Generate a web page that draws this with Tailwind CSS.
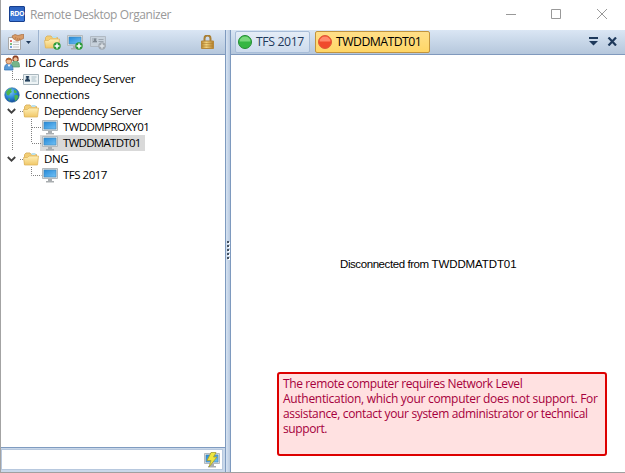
<!DOCTYPE html>
<html lang="en">
<head>
<meta charset="utf-8">
<title>Remote Desktop Organizer</title>
<script src="https://cdn.jsdelivr.net/npm/@tailwindcss/browser@4"></script>
</head>
<body class="w-[625px] h-[473px] overflow-hidden bg-white font-['Open_Sans','Noto_Sans',sans-serif] text-[11.5px] text-black">
<svg class="absolute w-0 h-0">
  <defs>
    <linearGradient id="blue" x1="0" y1="0" x2="1" y2="1"><stop offset="0" stop-color="#2589d8"/><stop offset="1" stop-color="#72c1f5"/></linearGradient>
    <linearGradient id="fold" x1="0" y1="0" x2="0" y2="1"><stop offset="0" stop-color="#fff0b8"/><stop offset="1" stop-color="#f0c767"/></linearGradient>
    <linearGradient id="gold" x1="0" y1="0" x2="1" y2="0"><stop offset="0" stop-color="#b98732"/><stop offset=".4" stop-color="#f4d681"/><stop offset="1" stop-color="#b27d2a"/></linearGradient>
    <radialGradient id="sea" cx=".4" cy=".3" r=".7"><stop offset="0" stop-color="#78c6f5"/><stop offset=".6" stop-color="#2884d3"/><stop offset="1" stop-color="#124c9c"/></radialGradient>
    <symbol id="folder" viewBox="0 0 16 16"><path d="M1.5 13.5V3.5L3 2h4l1 1.5h5.500V13.500z" fill="#f3ce74" stroke="#dcb566"/><path d="M8.500 2h4v2h-4z" fill="#b9e0ef"/><path d="M.5 6.500h4L6 5h9.500l-1 9H1.500z" fill="url(#fold)" stroke="#e0b65f" stroke-width=".8"/></symbol>
    <symbol id="monitor" viewBox="0 0 16 16"><path d="M.5 1.500h15v10H.5z" fill="#d9dddf" stroke="#b3b9bd"/><path d="M2 3h12v7H2z" fill="url(#blue)" stroke="#3c86bd" stroke-width=".6"/><path d="M6 12h4v2h2v1.500H4V14h2z" fill="#a9adb0"/></symbol>
    <symbol id="plus" viewBox="0 0 8 8"><circle cx="4" cy="4" r="3.700" fill="#2a9a38"/><path d="M4 1.600v4.800M1.600 4h4.800" stroke="#fff" stroke-width="1.500"/></symbol>
    <symbol id="chev" viewBox="0 0 9 6"><path d="M.8 1l3.700 3.700L8.200 1" fill="none" stroke="#404040" stroke-width="1.800"/></symbol>
  </defs>
</svg>
<div class="flex flex-col h-full border-l border-[#a3a3a3] border-b border-b-[#a0a0a0]">
  <header class="h-[30px] shrink-0 flex items-center bg-white">
    <div class="ml-2 -mt-[2px] w-4 h-4 rounded-[1px] border border-[#173f8e] bg-linear-to-b from-[#2b60bd] to-[#3e7bdc] text-white text-[7px] leading-[14px] font-bold text-center tracking-[-0.4px]">RDO</div>
    <div class="ml-[5px] -mt-px text-[12px] text-[#999] whitespace-nowrap leading-4 tracking-[-0.42px]">Remote Desktop Organizer</div>
    <svg class="ml-auto w-[102px] h-[12px] mr-[18px] -mt-[2px]" viewBox="0 0 102 12" fill="none" stroke="#999"><path d="M1 6.500h10M46.500 1.500h9v9h-9zM92 1l10 10M102 1L92 11"/></svg>
  </header>
  <div class="flex flex-1 min-h-0">
    <aside class="w-[224px] shrink-0 flex flex-col">
      <div class="h-[25px] shrink-0 flex items-center bg-linear-to-b from-[#dae6f4] to-[#b5c7dc] border-b border-[#8099bd]">
        <svg class="ml-[7px] w-4 h-4" viewBox="0 0 16 16"><path d="M.5 3.500h12v12H.5z" fill="#fafafa" stroke="#a8a8a8"/><path d="M2 7h2" stroke="#e54040" stroke-width="1.500"/><path d="M2 10h2" stroke="#53a953" stroke-width="1.500"/><path d="M2 13h2" stroke="#4c83d4" stroke-width="1.500"/><path d="M5 8h6M5 10.500h6M5 13h6" stroke="#c4c4c4"/><path d="M4 2l3-1.500 3 1L15.500 0v4.500L12 6 9 7 5 4.500z" fill="#d89c68" stroke="#a96d3f" stroke-width=".7"/><path d="M7 5l1-2M9 6l1-2M11 6l1-2" stroke="#a66c40" stroke-width=".6"/></svg>
        <svg class="ml-[2px] w-[5px] h-[3px] mt-px" viewBox="0 0 5 3"><path d="M0 0h5L2.500 3z" fill="#1e395b"/></svg>
        <div class="ml-[7px] w-[2px] h-full bg-[#9db3cf] border-r border-[#d7e3f1]"></div>
        <div class="relative ml-[4px] w-4 h-4"><svg class="w-4 h-4"><use href="#folder"/></svg><svg class="absolute left-[9px] top-[8px] w-2 h-2"><use href="#plus"/></svg></div>
        <div class="relative ml-[7px] w-4 h-4"><svg class="w-4 h-4"><use href="#monitor"/></svg><svg class="absolute left-[8px] top-[8px] w-2 h-2"><use href="#plus"/></svg></div>
        <svg class="ml-[7px] w-4 h-4" viewBox="0 0 16 16"><path d="M.5 2.500h15v10H.5z" fill="#c8d2dc" stroke="#b0b9c3"/><path d="M2 4h5v5H2z" fill="#b0bac4"/><path d="M3 8V7h1V4.500h2V7h1v1z" fill="#7f8993"/><path d="M8.500 5.500h5M8.500 7.500h5" stroke="#9da7b1"/><circle cx="12" cy="12" r="3.700" fill="#a1a9b1"/><path d="M12 9.600v4.800M9.600 12h4.800" stroke="#e0e5ea" stroke-width="1.400"/></svg>
        <svg class="ml-auto mr-[11px] w-[13px] h-[14px]" viewBox="0 0 13 14"><path d="M3.500 6V3.500a3 3 0 016 0V6" fill="none" stroke="#a97f34" stroke-width="2"/><path d="M.5 6h12v7.500H.5z" fill="url(#gold)" stroke="#b5883c"/><path d="M1 8.500h11M1 11h11" stroke="#ad7d2d" stroke-width=".6"/></svg>
      </div>
      <div class="relative flex-1 bg-white whitespace-nowrap leading-4">
        <div class="h-4 flex items-center pl-[3px] gap-[5px]">
          <svg class="w-4 h-4 shrink-0" viewBox="0 0 16 16"><path d="M7.500 12c0-5 1-6 4-6s4 2 4 6z" fill="#77b58a" stroke="#4b8f68" stroke-width=".7"/><path d="M8.500 6C8 2 9 .5 11.500.5S15 2 14.500 6z" fill="#8a3e22"/><circle cx="11.500" cy="4.300" r="2" fill="#f0bd92"/><path d="M.5 15c0-5 1-6 4-6s4.500 2 4.500 6z" fill="#5a9bd8" stroke="#2d6caf" stroke-width=".7"/><circle cx="4.800" cy="6" r="2.900" fill="#efb98c" stroke="#985530" stroke-width=".6"/><path d="M1.700 6C1.500 1.500 8 1.500 8 6 6 5 4 4 1.700 6z" fill="#ad5d2e"/><path d="M3.500 9.500L5 12l1.500-2.500z" fill="#fff"/></svg>
          <span class="tracking-[-0.25px]">ID Cards</span>
        </div>
        <div class="h-4 flex items-center pl-[22px] gap-[5px]">
          <svg class="w-4 h-4 shrink-0" viewBox="0 0 16 16"><path d="M.5 3.500h15v10H.5z" fill="#edf3f5" stroke="#a9b6bd"/><path d="M2 5h5v6H2z" fill="#cad8df"/><path d="M2 10.500V9l1.500-1L3 5h3l-.5 3L7 9v1.500z" fill="#233e5a"/><path d="M8.500 6h5M8.500 8h4M8.500 10h5" stroke="#9aafb9" stroke-width=".8"/></svg>
          <span class="tracking-[-0.4px]">Dependecy Server</span>
        </div>
        <div class="h-4 flex items-center pl-[3px] gap-[5px]">
          <svg class="w-4 h-4 shrink-0" viewBox="0 0 16 16"><circle cx="8" cy="8" r="7.300" fill="url(#sea)" stroke="#356f9d" stroke-width=".6"/><path d="M2 5l3-3 3-.5-1 2 1 1.500-2 1.500-1 2L3 8zM10 2.500l3 2-1 2-2-1zM10.500 8l3 0 1 2-2 3-1.500 1-.5-3zM4 11l2 1-.5 2z" fill="#4cb54e"/></svg>
          <span class="tracking-[-0.2px]">Connections</span>
        </div>
        <div class="h-4 flex items-center pl-[6px]">
          <svg class="w-[9px] h-[6px] mr-[6px]"><use href="#chev"/></svg><svg class="w-4 h-4 mr-[5px] ml-px"><use href="#folder"/></svg><span class="tracking-[-0.38px]">Dependency Server</span>
        </div>
        <div class="h-4 flex items-center pl-[41px] gap-[5px]"><svg class="w-4 h-4 shrink-0"><use href="#monitor"/></svg><span class="tracking-[-0.58px]">TWDDMPROXY01</span></div>
        <div class="h-4 flex items-center ml-[39px] w-[105px] pl-[2px] gap-[5px] bg-[#d9d9d9]"><svg class="w-4 h-4 shrink-0"><use href="#monitor"/></svg><span class="tracking-[-0.7px]">TWDDMATDT01</span></div>
        <div class="h-4 flex items-center pl-[6px]">
          <svg class="w-[9px] h-[6px] mr-[6px]"><use href="#chev"/></svg><svg class="w-4 h-4 mr-[5px] ml-px"><use href="#folder"/></svg><span class="tracking-[-0.4px]">DNG</span>
        </div>
        <div class="h-4 flex items-center pl-[41px] gap-[5px]"><svg class="w-4 h-4 shrink-0"><use href="#monitor"/></svg><span class="tracking-[-0.5px]">TFS 2017</span></div>
        <svg class="absolute left-0 top-0 w-[45px] h-[128px]" viewBox="0 0 45 128" fill="none" stroke="#808080" stroke-dasharray="1 1"><path d="M11.500 16v8.500h11M19 56.500h3M11.500 64v32M30.500 64v24M31 72.500h10M31 88.500h10M19 104.500h3M30.500 112v8.500h10"/></svg>
      </div>
      <div class="h-[25px] shrink-0 bg-[#c9d8ea] border-t border-[#7f9bc0] pt-px pb-[2px] pr-[2px] flex">
        <div class="flex-1 bg-white border border-[#b7c8de] flex items-center justify-end pr-[2px]">
          <svg class="w-4 h-4" viewBox="0 0 16 16"><use href="#monitor"/><path d="M7 .5h5L9.500 5H13L5 15l2-6.500H3z" fill="#eee640" stroke="#a69c2e" stroke-width=".8"/></svg>
        </div>
      </div>
    </aside>
    <div class="w-[6px] shrink-0 border-x border-[#7e9abf] bg-linear-to-r from-[#d6e3f2] to-[#b9cae0] flex flex-col items-center justify-center gap-[2px] pb-[3px]">
      <i class="w-[2px] h-[2px] bg-[#44505f] shadow-[1px_1px_0_white]"></i><i class="w-[2px] h-[2px] bg-[#44505f] shadow-[1px_1px_0_white]"></i><i class="w-[2px] h-[2px] bg-[#44505f] shadow-[1px_1px_0_white]"></i><i class="w-[2px] h-[2px] bg-[#44505f] shadow-[1px_1px_0_white]"></i><i class="w-[2px] h-[2px] bg-[#44505f] shadow-[1px_1px_0_white]"></i>
    </div>
    <main class="flex-1 flex flex-col min-w-0">
      <div class="h-[25px] shrink-0 flex items-start pt-px pl-[4px] bg-linear-to-b from-[#dae6f4] to-[#b5c7dc] border-b border-[#8099bd] text-[12.3px] leading-5 whitespace-nowrap">
        <div class="w-[75px] h-[22px] flex items-center pl-[2px] gap-[4px] rounded-[2px] border border-[#a8bdd8] bg-linear-to-b from-[#e5edf7] to-[#cddbed] text-[#1e395b]">
          <svg class="w-[14px] h-[14px] shrink-0" viewBox="0 0 14 14"><circle cx="7" cy="7" r="6.500" fill="#35b642" stroke="#238c32"/><path d="M1.500 6.500a5.500 5 0 0111 0z" fill="#79d77c"/></svg><span class="tracking-[-0.4px]">TFS 2017</span>
        </div>
        <div class="ml-[5px] w-[115px] h-[22px] flex items-center pl-[2px] gap-[4px] rounded-[2px] border border-[#c2943d] bg-linear-to-b from-[#ffdf88] to-[#ffd666]">
          <svg class="w-[14px] h-[14px] shrink-0" viewBox="0 0 14 14"><circle cx="7" cy="7" r="6.500" fill="#f04a2c" stroke="#de5a37"/><path d="M1.500 6.500a5.500 5 0 0111 0z" fill="#ff8a6b"/></svg><span class="tracking-[-0.55px]">TWDDMATDT01</span>
        </div>
        <svg class="ml-auto mr-[8px] mt-[6px] w-[28px] h-[9px]" viewBox="0 0 28 9"><path d="M0 0h9v2H0zM0 4h9L4.500 8.500z" fill="#1e395b"/><path d="M19.500 .5l7.500 8M27 .5l-7.500 8" stroke="#1e395b" stroke-width="2.200"/></svg>
      </div>
      <div class="flex-1 bg-white flex flex-col">
        <div class="mt-[201px] ml-[109px] font-['Liberation_Sans',Arial,sans-serif] text-[11.5px] leading-4 whitespace-nowrap"><span class="tracking-[-0.42px]">Disconnected from </span><span class="tracking-[-0.1px]">TWDDMATDT01</span></div>
        <div class="mt-[100px] ml-[46px] w-[330px] h-[84px] rounded-[3px] border-2 border-[#dd0000] bg-[#ffe1e1] text-[#a6003c] pl-[4px] pt-[2px] text-[12px] leading-[15px] whitespace-nowrap">
          <div class="tracking-[-0.38px]">The remote computer requires Network Level</div>
          <div class="tracking-[-0.3px]">Authentication, which your computer does not support. For</div>
          <div class="tracking-[-0.34px]">assistance, contact your system administrator or technical</div>
          <div class="tracking-[-0.4px]">support.</div>
        </div>
      </div>
    </main>
  </div>
</div>
</body>
</html>
